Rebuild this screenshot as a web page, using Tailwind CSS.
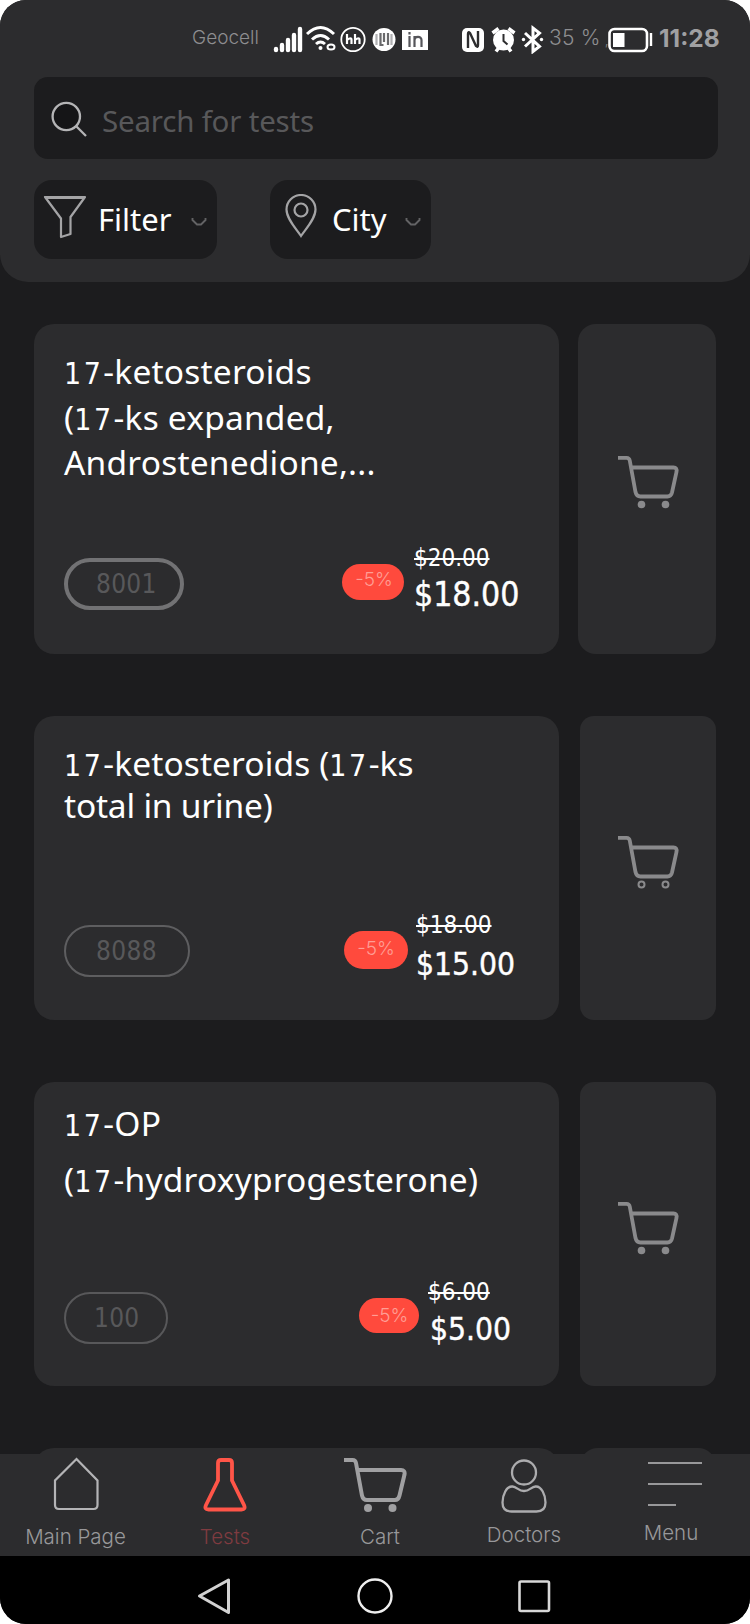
<!DOCTYPE html>
<html lang="en">

<head>
    <meta charset="UTF-8">
    <meta name="viewport" content="width=device-width, initial-scale=1.0">
    <title>Tests</title>
    <script src="https://cdn.jsdelivr.net/npm/@tailwindcss/browser@4"></script>
</head>

<body class="bg-white">
    <div class="w-[750px] h-[1624px] rounded-[26px] overflow-hidden bg-[#1c1c1e] flex flex-col font-['Noto_Sans',sans-serif] text-white whitespace-nowrap">

        <!-- Header -->
        <header class="h-[282px] shrink-0 bg-[#2c2c2e] rounded-b-[28px] pl-[34px] pr-8">
            <!-- Status bar -->
            <div class="h-[77px] pt-[24px] pl-[158px] -mr-8 flex items-start font-['Inter',sans-serif] text-[#8e8e90]">
                <span class="w-[81px] text-[19px] leading-[28px] font-light">Geocell</span>
                <svg class="w-[260px] h-[30px] shrink-0 text-white" viewBox="273 24 260 30" fill="none" stroke="currentColor">
                    <!-- signal -->
                    <path stroke-width="4.400" stroke-linecap="round" d="M276 50v-1M282 50v-5M288 50v-10M294 50v-15M300 50v-21" />
                    <!-- wifi -->
                    <path stroke-width="3" d="M307 34q13.500-13 27 0M312 39.500q8.500-8 17 0M316 44q4.500-4 9 0" />
                    <circle cx="320.500" cy="48" r="2" fill="currentColor" stroke="none" />
                    <ellipse cx="331" cy="47" rx="3.500" ry="2.500" stroke-width="2" />
                    <!-- hh -->
                    <circle cx="353" cy="39.500" r="11.700" stroke-width="1.800" />
                    <path stroke-width="2.200" d="M347 34v10M347 40q4.500-3.500 4.500 0v4M355 34v10M355 40q4.500-3.500 4.500 0v4" />
                    <!-- round app badge -->
                    <circle cx="384" cy="39.500" r="11.500" fill="currentColor" stroke="none" />
                    <path stroke="#b0b0b2" stroke-width="2.200" d="M376.500 34v11M391.500 34v11" />
                    <path stroke="#6a6a6c" stroke-width="2.200" d="M380.500 33v12h3M384 33v9M388 33v12" />
                    <!-- in -->
                    <path fill="currentColor" stroke="none" d="M402 30h26v20h-26z" />
                    <path stroke="#55555a" stroke-width="2.200" d="M409.500 36v11M409.500 32v2.500M414.500 47v-11M414.500 40c0-4 7-4.500 7 0v7" />
                    <!-- nfc -->
                    <rect x="462" y="28" width="22" height="24" rx="5" fill="currentColor" stroke="none" />
                    <path stroke="#2c2c2e" stroke-width="2.400" stroke-linejoin="round" d="M468 48V34q0-3 2-1l6 13q2 2 2-1V31" />
                    <!-- alarm -->
                    <circle cx="503.500" cy="40" r="10.500" fill="currentColor" stroke="none" />
                    <path stroke-width="3.500" d="M492.500 33l6-4.500M514.500 33l-6-4.500M496 51.500l3-4M511 51.500l-3-4" />
                    <path stroke="#2c2c2e" stroke-width="2" d="M503.500 34v7l4 3.500" />
                </svg>
                <svg class="w-[24px] h-[30px] shrink-0 -ml-[12px] text-white" viewBox="521 24 24 30" fill="none" stroke="currentColor" stroke-width="3">
                    <path d="M525 33l14.500 13.500-6.500 5V28l6.500 5L525 46.500" />
                    <circle cx="523.500" cy="39.500" r="1.700" fill="currentColor" stroke="none" />
                    <circle cx="541.500" cy="39.500" r="1.700" fill="currentColor" stroke="none" />
                </svg>
                <span class="w-[63px] pl-[4px] text-[21px] leading-[28px] font-light tracking-[0.2px]">35 %<span class="text-[14px]"> ,</span></span>
                <svg class="w-[46px] h-[30px] shrink-0 text-white" viewBox="608 24 46 30" fill="none" stroke="currentColor">
                    <rect x="609.500" y="29" width="37.500" height="22" rx="5" stroke-width="2.600" />
                    <path fill="currentColor" stroke="none" d="M613 33h11.500v14h-11.500z" />
                    <path stroke-width="2.400" d="M651 33v13" />
                </svg>
                <span class="pl-[5px] text-[24.500px] leading-[28px] font-bold text-[#a0a0a2]">11:28</span>
            </div>

            <!-- Search -->
            <div class="h-[82px] rounded-[14px] bg-[#1c1c1e] flex items-start">
                <svg class="w-[36px] h-[36px] mt-[24px] ml-[17px]" viewBox="0 0 36 36" fill="none" stroke="#b4b4b6" stroke-width="2.300">
                    <circle cx="15.300" cy="15.500" r="13.700" fill="#151517" />
                    <path d="M25 25l10 10" />
                </svg>
                <span class="ml-[15px] mt-[23px] text-[29.500px] leading-[42px] tracking-[-0.2px] text-[#58585a]">Search for tests</span>
            </div>

            <!-- Filter buttons -->
            <div class="mt-[21px] flex gap-[53px]">
                <button class="w-[183px] h-[79px] rounded-[18px] bg-[#1c1c1e] flex items-start">
                    <svg class="w-[44px] h-[46px] mt-[14px] ml-[9px]" viewBox="0 0 44 46" fill="none" stroke="#a4a4a6" stroke-width="2.200" stroke-linejoin="round">
                        <path d="M2 3h40L27.500 23v17L18 43V24.500z" />
                        <path d="M2 3.500h40" stroke-width="3" />
                    </svg>
                    <span class="ml-[11px] mt-[18px] text-[31px] leading-[42px]">Filter</span>
                    <svg class="w-[16px] h-[10px] mt-[37px] ml-[19px]" viewBox="0 0 16 10" fill="none" stroke="#636365" stroke-width="1.900">
                        <path d="M1.500 1v2l4.500 4.500h4L14.500 3V1" />
                    </svg>
                </button>
                <button class="w-[161px] h-[79px] rounded-[18px] bg-[#1c1c1e] flex items-start">
                    <svg class="w-[32px] h-[44px] mt-[14px] ml-[15px]" viewBox="0 0 32 44" fill="none" stroke="#a4a4a6" stroke-width="2.200">
                        <path d="M16 42C10.500 34 1.500 24.500 1.500 15.500a14.500 14.500 0 0 1 29 0C30.500 24.500 21.500 34 16 42z" />
                        <circle cx="16" cy="16" r="6.500" />
                    </svg>
                    <span class="ml-[15px] mt-[18px] text-[31px] leading-[42px]">City</span>
                    <svg class="w-[16px] h-[10px] mt-[37px] ml-[18px]" viewBox="0 0 16 10" fill="none" stroke="#636365" stroke-width="1.900">
                        <path d="M1.500 1v2l4.500 4.500h4L14.500 3V1" />
                    </svg>
                </button>
            </div>
        </header>

        <!-- Test list -->
        <main class="h-[1172px] shrink-0 overflow-hidden pt-[42px] pl-[34px] flex flex-col">

            <div class="h-[330px] shrink-0 flex gap-[19px] mb-[62px]">
                <div class="w-[525px] rounded-[20px] bg-[#2c2c2e] pt-[24px] pb-[37px] pl-[30px] flex flex-col justify-between">
                    <h2 class="text-[33.500px] tracking-[0.200px]">
                        <span class="block h-[46px] leading-[46px]"><span class="font-['DejaVu_Sans_Condensed'] text-[30px] leading-none tracking-[2.500px]">17</span>-ketosteroids</span>
                        <span class="block h-[46px] leading-[46px]">(<span class="font-['DejaVu_Sans_Condensed'] text-[30px] leading-none tracking-[2.500px]">17</span>-ks expanded,</span>
                        <span class="block h-[44px] leading-[44px]">Androstenedione,...</span>
                    </h2>
                    <div class="flex items-start font-['DejaVu_Sans_Condensed']">
                        <span class="mt-[15px] w-[120px] h-[52px] rounded-full border-4 border-[#727274] pl-[28px] text-[26px] leading-[44px] tracking-[0.300px] text-[#58585a]">8001</span>
                        <span class="mt-[21px] ml-[158px] w-[62px] h-[36px] rounded-full bg-[#ff4a3d] pl-[2px] text-center font-['Inter'] font-light text-[19px] leading-[32px] text-[#ff9d94]">-5%</span>
                        <div class="ml-[10px]">
                            <div class="text-[24px] leading-[30px] line-through decoration-2">$20.00</div>
                            <div class="text-[33.500px] leading-[44px] [-webkit-text-stroke:0.4px_white]">$18.00</div>
                        </div>
                    </div>
                </div>
                <div class="w-[138px] rounded-[18px] bg-[#2c2c2e] pt-[130px] pl-[39px]">
                    <svg class="w-[62px] h-[56px]" viewBox="0 0 62 56" fill="none" stroke="#8a8a8c" stroke-width="3.800">
                        <path d="M1 3.800h8.500q2.800 0 3.300 3L18.500 38q1 4.500 5 4.500h27q3.500 0 4.500-4l4.500-20.500q.8-4.500-3-4.500H14" />
                        <circle cx="24.500" cy="50.500" r="3.800" fill="#8a8a8c" stroke="none" />
                        <circle cx="48.500" cy="50.500" r="3.800" fill="#8a8a8c" stroke="none" />
                    </svg>
                </div>
            </div>

            <div class="h-[304px] shrink-0 flex gap-[21px] mb-[62px]">
                <div class="w-[525px] rounded-[20px] bg-[#2c2c2e] pt-[26px] pb-[31px] pl-[30px] flex flex-col justify-between">
                    <h2 class="text-[33.500px]">
                        <span class="block h-[42px] leading-[42px] tracking-[0.100px]"><span class="font-['DejaVu_Sans_Condensed'] text-[30px] leading-none tracking-[2.500px]">17</span>-ketosteroids (<span class="font-['DejaVu_Sans_Condensed'] text-[30px] leading-none tracking-[2.500px]">17</span>-ks</span>
                        <span class="block h-[42px] leading-[42px] tracking-[-0.200px]">total in urine)</span>
                    </h2>
                    <div class="flex items-start font-['DejaVu_Sans_Condensed']">
                        <span class="mt-[15px] w-[126px] h-[52px] rounded-full border-2 border-[#5e5e60] pl-[30px] text-[26px] leading-[48px] tracking-[0.400px] text-[#58585a]">8088</span>
                        <span class="mt-[21px] ml-[154px] w-[64px] h-[38px] rounded-full bg-[#ff4a3d] text-center font-['Inter'] font-light text-[19px] leading-[35px] text-[#ff9d94]">-5%</span>
                        <div class="ml-[8px]">
                            <div class="text-[24px] leading-[30px] line-through decoration-2">$18.00</div>
                            <div class="text-[31.500px] leading-[49px] [-webkit-text-stroke:0.4px_white]">$15.00</div>
                        </div>
                    </div>
                </div>
                <div class="w-[136px] rounded-[14px] bg-[#2c2c2e] pt-[118px] pl-[37px]">
                    <svg class="w-[62px] h-[56px]" viewBox="0 0 62 56" fill="none" stroke="#8a8a8c" stroke-width="3.800">
                        <path d="M1 3.800h8.500q2.800 0 3.300 3L18.500 38q1 4.500 5 4.500h27q3.500 0 4.500-4l4.500-20.500q.8-4.500-3-4.500H14" />
                        <circle cx="24.500" cy="50.500" r="3" stroke-width="2" />
                        <circle cx="48.500" cy="50.500" r="3" stroke-width="2" />
                    </svg>
                </div>
            </div>

            <div class="h-[304px] shrink-0 flex gap-[21px] mb-[62px]">
                <div class="w-[525px] rounded-[20px] bg-[#2c2c2e] pt-[13px] pb-[34px] pl-[30px] flex flex-col justify-between">
                    <h2 class="text-[33.500px] tracking-[0.200px]">
                        <span class="block h-[56px] leading-[56px]"><span class="font-['DejaVu_Sans_Condensed'] text-[30px] leading-none tracking-[2.500px]">17</span>-OP</span>
                        <span class="block h-[56px] leading-[56px]">(<span class="font-['DejaVu_Sans_Condensed'] text-[30px] leading-none tracking-[2.500px]">17</span>-hydroxyprogesterone)</span>
                    </h2>
                    <div class="flex items-start font-['DejaVu_Sans_Condensed']">
                        <span class="mt-[15px] w-[104px] h-[52px] rounded-full border-2 border-[#58585a] pl-[28px] text-[26px] leading-[48px] tracking-[0.300px] text-[#58585a]">100</span>
                        <span class="mt-[21px] ml-[191px] w-[60px] h-[35px] rounded-full bg-[#ff4a3d] pl-[1px] text-center font-['Inter'] font-light text-[19px] leading-[35px] text-[#ff9d94]">-5%</span>
                        <div class="ml-[9px]">
                            <div class="text-[24px] leading-[30px] line-through decoration-2">$6.00</div>
                            <div class="ml-[2px] text-[31.500px] leading-[45px] [-webkit-text-stroke:0.4px_white]">$5.00</div>
                        </div>
                    </div>
                </div>
                <div class="w-[136px] rounded-[14px] bg-[#2c2c2e] pt-[118px] pl-[37px]">
                    <svg class="w-[62px] h-[56px]" viewBox="0 0 62 56" fill="none" stroke="#8a8a8c" stroke-width="3.800">
                        <path d="M1 3.800h8.500q2.800 0 3.300 3L18.500 38q1 4.500 5 4.500h27q3.500 0 4.500-4l4.500-20.500q.8-4.500-3-4.500H14" />
                        <circle cx="24.500" cy="50.500" r="3.800" fill="#8a8a8c" stroke="none" />
                        <circle cx="48.500" cy="50.500" r="3.800" fill="#8a8a8c" stroke="none" />
                    </svg>
                </div>
            </div>

            <!-- next card, hidden by the tab bar -->
            <div class="h-[304px] shrink-0 flex gap-[21px]">
                <div class="w-[525px] rounded-[20px] bg-[#2c2c2e]"></div>
                <div class="w-[136px] rounded-[18px] bg-[#2c2c2e]"></div>
            </div>
        </main>

        <!-- Tab bar -->
        <nav class="h-[102px] shrink-0 bg-[#2c2c2e] grid grid-cols-[151px_148px_162px_126px_168px] font-['Inter',sans-serif] font-light text-[20.500px] leading-[26px] text-[#98989a]">
            <a href="#" class="flex flex-col items-center">
                <svg class="w-[46px] h-[54px] mt-[3px]" viewBox="0 0 46 54" fill="none" stroke="#b4b4b6" stroke-width="2.200">
                    <path d="M23.500 2L44.500 23.500V48q0 4-4 4H6q-4 0-4-4V23.500z" />
                </svg>
                <span class="mt-[13px]">Main Page</span>
            </a>
            <a href="#" class="flex flex-col items-center text-[#7f3b40]">
                <svg class="w-[44px] h-[56px] mt-[2px]" viewBox="0 0 44 56" fill="none" stroke="#ff5548" stroke-width="3.800" stroke-linejoin="round">
                    <path d="M18 4h8q3 0 3 3v17.500L41 49q2 4.500-2.500 4.500h-33Q1 53.500 3 49l12-24.500V7q0-3 3-3z" />
                </svg>
                <span class="mt-[12px]">Tests</span>
            </a>
            <a href="#" class="flex flex-col items-center">
                <svg class="w-[64px] h-[56px] mt-[3px] -ml-[10px]" viewBox="0 0 64 56" fill="none" stroke="#a0a0a2" stroke-width="4">
                    <path d="M1 3h8.500q3 0 3.500 3L19 38.500q1 4.500 5 4.500h28q3.500 0 4.500-4.500l5-21q.8-4.500-3.500-4.500H14" />
                    <circle cx="25" cy="51" r="4" fill="#a0a0a2" stroke="none" />
                    <circle cx="49.500" cy="51" r="4" fill="#a0a0a2" stroke="none" />
                </svg>
                <span class="mt-[11px]">Cart</span>
            </a>
            <a href="#" class="flex flex-col items-center">
                <svg class="w-[46px] h-[54px] mt-[5px]" viewBox="0 0 46 54" fill="none" stroke="#acacae" stroke-width="2.300">
                    <circle cx="23" cy="13.500" r="12" />
                    <path d="M11.500 27.500C5.500 27 1.500 36 1.500 43.500q0 9 9 9h25q9 0 9-9C44.500 36 40.500 27 34.500 27.500c-4.500 .5-6 4.500-11.500 4.500S16 28 11.500 27.500z" />
                </svg>
                <span class="mt-[9px]">Doctors</span>
            </a>
            <a href="#" class="flex flex-col items-center">
                <svg class="w-[54px] h-[46px] mt-[8px] ml-[7px]" viewBox="0 0 54 46" fill="none" stroke="#98989a" stroke-width="2">
                    <path d="M0 1h54M0 22h54M0 43h28" />
                </svg>
                <span class="mt-[12px]">Menu</span>
            </a>
        </nav>

        <!-- System navigation -->
        <div class="h-[68px] shrink-0 bg-black flex items-start pl-[197px] pt-[21px]">
            <svg class="w-[34px] h-[38px]" viewBox="0 0 34 38" fill="none" stroke="#d2d2d2" stroke-width="3" stroke-linejoin="round">
                <path d="M31.500 3v32.500L2.500 19z" />
            </svg>
            <svg class="w-[36px] h-[38px] ml-[126px]" viewBox="0 0 36 38" fill="none" stroke="#eeeeee" stroke-width="2.400">
                <circle cx="18" cy="19" r="16.500" />
            </svg>
            <svg class="w-[34px] h-[38px] ml-[124px]" viewBox="0 0 34 38" fill="none" stroke="#d8d8d8" stroke-width="2.600">
                <rect x="2.500" y="4.500" width="29.500" height="29.500" rx="1.500" />
            </svg>
        </div>
    </div>
</body>

</html>
